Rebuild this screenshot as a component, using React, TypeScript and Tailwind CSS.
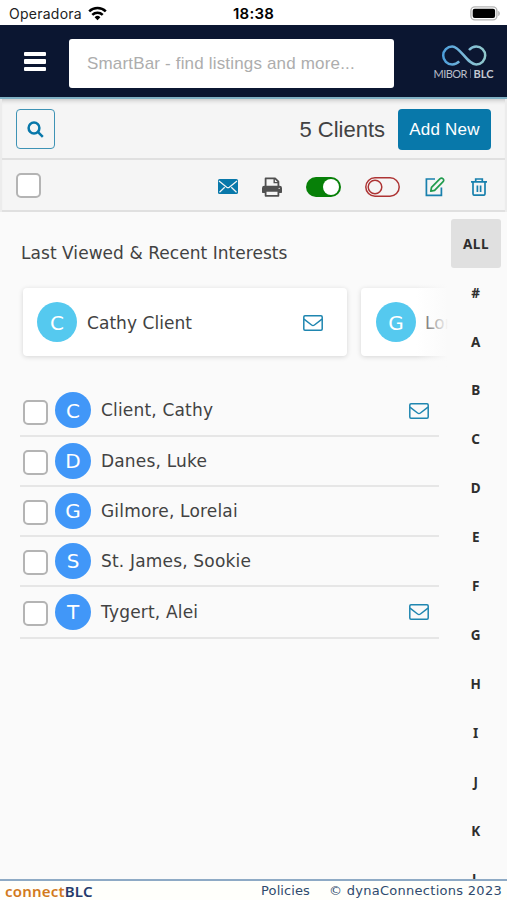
import { useState } from 'react';
import clsx from 'clsx';

interface Client {
  name: string;
  initial: string;
  hasEmail?: boolean;
  rowClass: string;
}

const clients: Client[] = [
  { name: 'Client, Cathy', initial: 'C', hasEmail: true, rowClass: 'h-[51px]' },
  { name: 'Danes, Luke', initial: 'D', rowClass: 'h-[50px]' },
  { name: 'Gilmore, Lorelai', initial: 'G', rowClass: 'h-[50px]' },
  { name: 'St. James, Sookie', initial: 'S', rowClass: 'h-[50px]' },
  { name: 'Tygert, Alei', initial: 'T', hasEmail: true, rowClass: 'h-[52px]' },
];

const letters = ['ALL', '#', 'A', 'B', 'C', 'D', 'E', 'F', 'G', 'H', 'I', 'J', 'K', 'L'];

function WifiIcon() {
  return (
    <svg width="19" height="15" viewBox="0 0 19 15" fill="none" stroke="#000" strokeWidth="2.5">
      <path d="M1.2 5.4a11.8 11.8 0 0 1 16.6 0" />
      <path d="M4.3 8.8a7.4 7.4 0 0 1 10.4 0" />
      <path d="M9.5 14.2 6.6 11.3a4.1 4.1 0 0 1 5.8 0Z" fill="#000" stroke="none" />
    </svg>
  );
}

function BatteryIcon() {
  return (
    <svg width="31" height="15" viewBox="0 0 31 15">
      <rect x="0.9" y="0.9" width="26" height="13" rx="4" fill="#fff" stroke="#b5b5b5" strokeWidth="1.4" />
      <rect x="2.7" y="2.7" width="22.4" height="9.4" rx="2" />
      <path d="M28.3 5v5c1.9-.6 1.9-4.4 0-5Z" fill="#a8a8a8" />
    </svg>
  );
}

function Logo() {
  return (
    <svg width="62" height="36" viewBox="0 0 62 36" className="block">
      <defs>
        <linearGradient id="loop" gradientUnits="userSpaceOnUse" x1="9" y1="0" x2="53" y2="0">
          <stop offset="0" stopColor="#4a9ddb" />
          <stop offset="0.5" stopColor="#79b8d9" />
          <stop offset="1" stopColor="#91c8cb" />
        </linearGradient>
      </defs>
      <path
        d="M26.2 16.4c-1.8 1.8-4 3-7 3a9 9 0 1 1 0-18c8.2 0 15 18 24 18a9 9 0 1 0 0-18c-3.2 0-5.4 1.6-7.2 3.6"
        fill="none"
        stroke="url(#loop)"
        strokeWidth="2.5"
      />
      <text x="0.5" y="32.5" textLength="34" fill="#b9bdc9" className="font-['Lato'] text-[11px]">MIBOR</text>
      <path d="M37.5 24v9" stroke="#687087" strokeWidth="0.7" />
      <text x="40.5" y="32.5" textLength="20" fill="#c4c8d2" className="font-['Lato'] text-[11px] font-bold">BLC</text>
    </svg>
  );
}

function MailIcon() {
  return (
    <svg width="20" height="16" viewBox="0 0 20 16" fill="none" stroke="#1f86b0" strokeWidth="1.5">
      <rect x="0.8" y="0.8" width="18.4" height="14.4" rx="1.2" />
      <path d="M1 4.2 8.6 10q1.4 1 2.8 0L19 4.2" />
    </svg>
  );
}

function SolidMailIcon() {
  return (
    <svg width="20" height="15" viewBox="0 0 20 15">
      <rect width="20" height="15" rx="1.6" fill="#0878aa" />
      <path d="m1 2 7.7 6.2q1.3 1 2.6 0L19 2M1.5 13.2l5.2-5M18.5 13.2l-5.2-5" fill="none" stroke="#f5f5f5" strokeWidth="1.2" />
    </svg>
  );
}

function PrintIcon() {
  return (
    <svg width="20" height="20" viewBox="0 0 20 20">
      <path d="M3.6 9.5V1.4h9.5l3.3 3.3v4.8" fill="#f5f5f5" stroke="#505050" strokeWidth="1.8" strokeLinejoin="round" />
      <path d="M12.2 1.5v4.1h4.2" fill="none" stroke="#505050" strokeWidth="1.4" />
      <path d="M2.6 8.7h14.8A2.4 2.4 0 0 1 20 11v4.3q0 .7-.7.7H.7q-.7 0-.7-.7V11a2.4 2.4 0 0 1 2.6-2.3Z" fill="#505050" />
      <path d="M3.6 13.8h12.8v5H3.6Z" fill="#f5f5f5" stroke="#505050" strokeWidth="1.8" strokeLinejoin="round" />
      <circle cx="17.2" cy="11.4" r="0.7" fill="#ddd" />
    </svg>
  );
}

function EditIcon() {
  return (
    <svg width="20" height="20" viewBox="0 0 20 20" fill="none" strokeWidth="1.7">
      <path d="M10 2H1.4v16.4h15V10.6" stroke="#1880ad" />
      <path d="m5.8 14.2.7-3.9 8.6-8.6a1.9 1.9 0 0 1 2.8 0l.2.2a1.9 1.9 0 0 1 0 2.8l-8.5 8.6Z" stroke="#209b4d" strokeLinejoin="round" />
    </svg>
  );
}

function TrashIcon() {
  return (
    <svg width="16" height="18" viewBox="0 0 16 18" fill="none" stroke="#1880ad" strokeWidth="1.7">
      <path d="M0 3.8h16M4.7 3.5V1h6.6v2.5M2 4.2v11.6q0 1.4 1.4 1.4h9.2q1.4 0 1.4-1.4V4.2M6.4 7.5v6.4M9.6 7.5v6.4" />
    </svg>
  );
}

function Checkbox({ label }: { label: string }) {
  return (
    <input
      type="checkbox"
      aria-label={label}
      className="size-[25px] shrink-0 appearance-none rounded-[5px] border-2 border-[#b4b4b4] bg-white checked:bg-[#0878aa]"
    />
  );
}

export default function App() {
  const [activeLetter, setActiveLetter] = useState('ALL');

  return (
    <div className="flex h-[900px] w-[507px] flex-col overflow-hidden bg-[#fafafa] font-['DejaVu_Sans',sans-serif] text-[#424242]">
      {/* Status bar */}
      <div className="grid h-[25px] shrink-0 grid-cols-3 items-center bg-white pt-[2px] font-['Inter',sans-serif] text-black">
        <div className="flex items-center gap-[6px] pl-[9px] text-[14px]">
          <span className="tracking-[0.25px] text-[#222]">Operadora</span>
          <WifiIcon />
        </div>
        <span className="pt-px text-center text-[15px] font-semibold tracking-[0.2px]">18:38</span>
        <div className="flex justify-end pr-[6px]">
          <BatteryIcon />
        </div>
      </div>

      {/* Header */}
      <header className="flex h-[74px] shrink-0 items-center border-b-2 border-[#80b1c5] bg-[#0b1631] pr-[12px] pl-[24px]">
        <button aria-label="Menu" className="mt-px flex w-[22px] flex-col gap-[3px]">
          <span className="h-[4.5px] rounded-[1px] bg-white" />
          <span className="h-[4.5px] rounded-[1px] bg-white" />
          <span className="h-[4.5px] rounded-[1px] bg-white" />
        </button>
        <input
          placeholder="SmartBar - find listings and more..."
          className="mt-[4px] ml-[23px] h-[49px] w-[325px] rounded-[3px] bg-white px-[18px] pt-px font-['Liberation_Sans',sans-serif] text-[17px] tracking-[0.17px] outline-none placeholder:text-[#adadad]"
        />
        <div className="ml-auto pt-[4px]">
          <Logo />
        </div>
      </header>

      {/* Toolbar */}
      <div className="shrink-0 border-x-2 border-[#ececec] bg-[#f5f5f5] shadow-[inset_0_5px_5px_-4px_#bbb]">
        <div className="flex h-[61px] items-center border-b-2 border-[#e0e0e0] px-[14px] pt-px font-['Liberation_Sans',sans-serif]">
          <button aria-label="Search" className="flex h-[40px] w-[39px] items-center justify-center rounded-[4px] border-[1.5px] border-[#3e93b5]">
            <svg width="17" height="17" viewBox="0 0 17 17" fill="none" stroke="#0878aa" strokeWidth="2.5">
              <circle cx="7" cy="7" r="5.4" />
              <path d="m10.8 10.8 5 5" />
            </svg>
          </button>
          <h1 className="mr-[13px] ml-auto text-[22px]">5 Clients</h1>
          <button className="h-[41px] w-[93px] rounded-[4px] bg-[#0878aa] pt-[2px] text-[17px] tracking-[0.25px] text-white">Add New</button>
        </div>
        <div className="flex h-[52px] items-center border-b-2 border-[#e0e0e0] pr-[18px] pl-[14px]">
          <Checkbox label="Select all clients" />
          <div className="mt-[3px] ml-auto flex items-center">
            <SolidMailIcon />
            <div className="ml-[24px]"><PrintIcon /></div>
            <div className="ml-[24px] flex h-[20px] w-[35px] items-center justify-end rounded-full bg-[#078008] px-[2px]">
              <span className="size-[16px] rounded-full bg-white" />
            </div>
            <svg width="35" height="20" viewBox="0 0 35 20" fill="none" stroke="#ad3434" strokeWidth="1.5" className="ml-[24px]">
              <rect x="0.8" y="0.8" width="33.4" height="18.4" rx="9.2" />
              <circle cx="10" cy="10" r="6.8" />
            </svg>
            <div className="ml-[25px]"><EditIcon /></div>
            <div className="ml-[26px]"><TrashIcon /></div>
          </div>
        </div>
      </div>

      <div className="flex min-h-0 flex-1">
        <main className="w-[448px] shrink-0 overflow-hidden">
          <h2 className="pt-[29px] pl-[21px] text-[17px] leading-[24px] tracking-[0.05px]">Last Viewed & Recent Interests</h2>

          {/* Recent clients, faded on the right edge */}
          <div className="relative mt-[17px] h-[86px] overflow-hidden pt-[6px] pl-[23px]">
            <div className="flex w-[700px] gap-[14px]">
              <div className="flex h-[68px] w-[324px] items-center rounded-[4px] bg-white pr-[24px] pl-[14px] shadow-[0_1px_5px_#00000026]">
                <span className="flex size-[40px] items-center justify-center rounded-full bg-[#55c9ef] pt-px text-[20px] text-white">C</span>
                <span className="ml-[10px] pt-[4px] text-[17px] tracking-[0.05px]">Cathy Client</span>
                <div className="mt-[2px] ml-auto"><MailIcon /></div>
              </div>
              <div className="flex h-[68px] w-[324px] items-center rounded-[4px] bg-white pl-[15px] shadow-[0_1px_5px_#00000026]">
                <span className="flex size-[40px] items-center justify-center rounded-full bg-[#55c9ef] pt-px text-[20px] text-white">G</span>
                <span className="ml-[9px] pt-[4px] text-[17px]">Lorelai</span>
              </div>
            </div>
            <div className="absolute inset-y-0 right-0 w-[32px] bg-linear-to-r from-transparent to-[#fafafa]" />
          </div>

          {/* Client list */}
          <ul className="mt-[18px] ml-[20px] w-[419px]">
            {clients.map((client) => (
              <li key={client.name} className={clsx('flex items-center border-b-2 border-[#e6e6e6] pr-[10px] pl-[2.5px]', client.rowClass)}>
                <div className="mt-[3px] flex">
                  <Checkbox label={`Select ${client.name}`} />
                </div>
                <span className="mb-px ml-[7.5px] flex size-[36px] items-center justify-center rounded-full bg-[#4197f8] pt-px text-[20px] text-white">
                  {client.initial}
                </span>
                <span className="ml-[10px] pt-px text-[17px] tracking-[0.18px]">{client.name}</span>
                {client.hasEmail && <div className="ml-auto"><MailIcon /></div>}
              </li>
            ))}
          </ul>
        </main>

        {/* Alphabet index */}
        <nav className="ml-[3px] flex w-[50px] flex-col overflow-hidden pt-[7px]">
          {letters.map((letter) => (
            <button
              key={letter}
              onClick={() => setActiveLetter(letter)}
              className={clsx(
                "h-[48.9px] shrink-0 rounded-[3px] pt-px font-['Noto_Sans',sans-serif] text-[13.5px] font-bold tracking-[0.6px] text-[#2e2e2e]",
                letter === activeLetter && 'bg-[#e0e0e0]',
              )}
            >
              {letter}
            </button>
          ))}
        </nav>
      </div>

      {/* Footer */}
      <footer className="flex h-[21px] shrink-0 items-center border-t-2 border-[#8eaac5] bg-[#fffffb] pr-[5px] pl-[5px] pt-px text-[13px] text-[#2f4b6e]">
        <span className="font-['Noto_Sans',sans-serif] text-[15px] leading-none font-semibold tracking-[0.2px]">
          <span className="text-[#d27a1c]">connect</span>
          <span className="text-[#263c6b]">BLC</span>
        </span>
        <a className="mr-[19px] ml-auto tracking-[0.1px]">Policies</a>
        <span className="tracking-[0.28px]">© dynaConnections 2023</span>
      </footer>
    </div>
  );
}
